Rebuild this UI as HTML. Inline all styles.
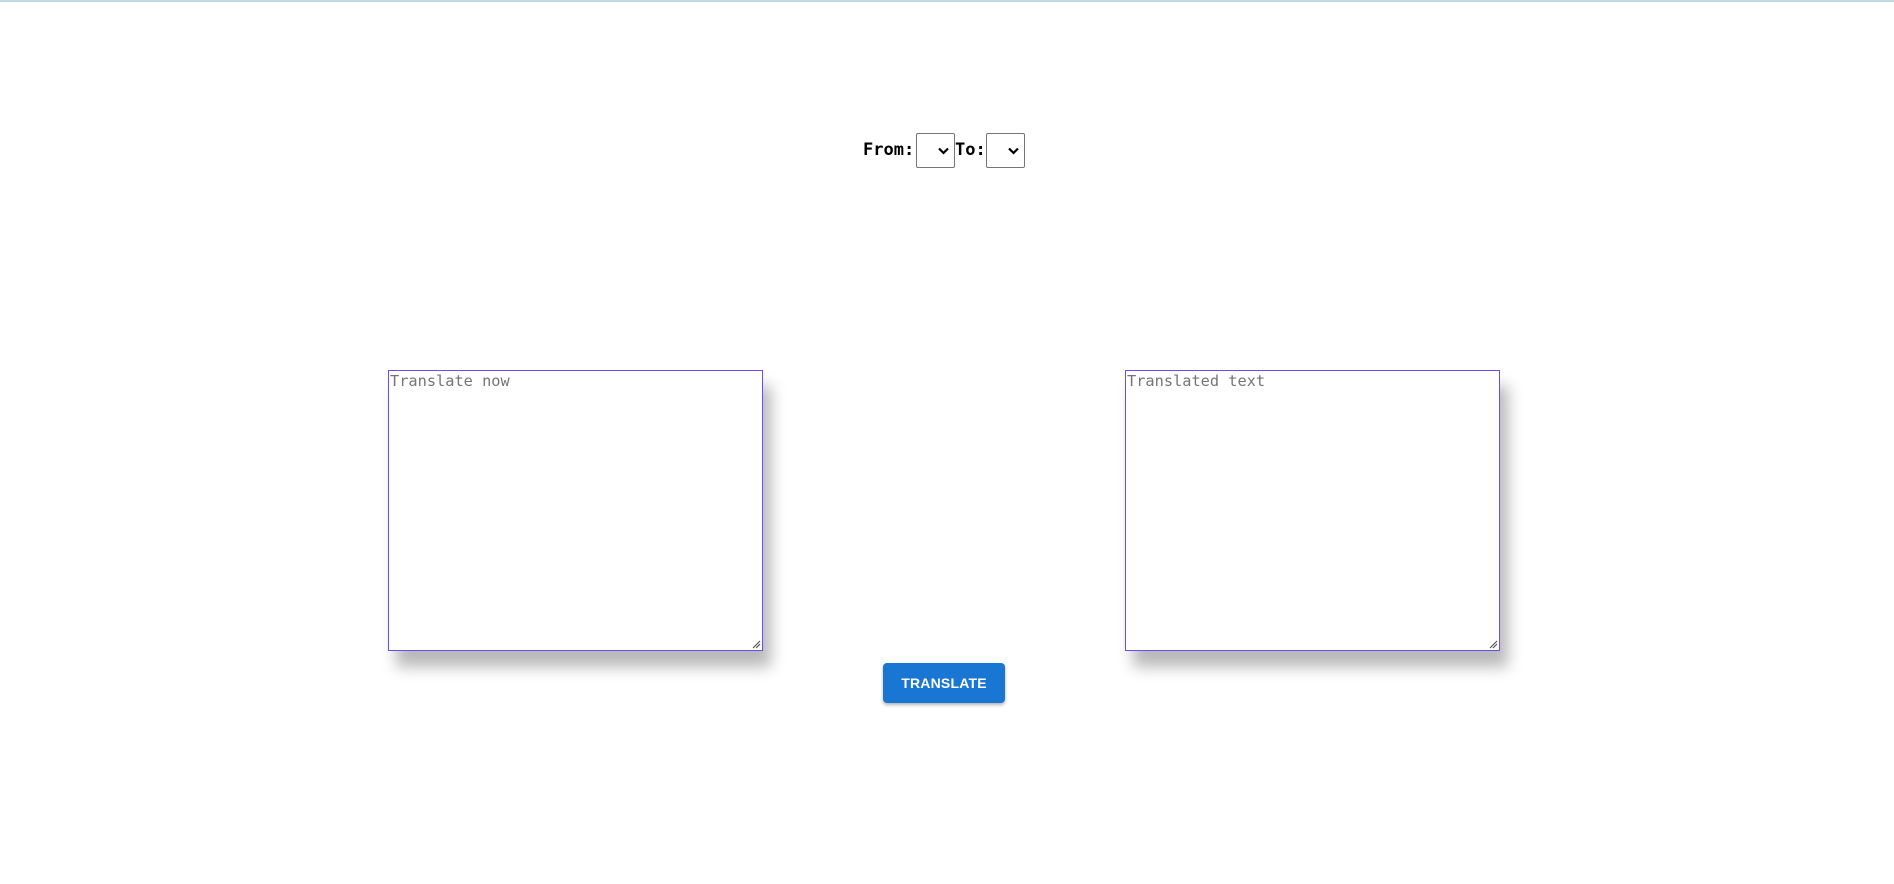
<!DOCTYPE html>
<html><head><meta charset="utf-8"><style>
html,body{margin:0;padding:0;background:#fff;width:1894px;height:884px;overflow:hidden;position:relative}
.topbar{position:absolute;left:0;top:0;width:100%;height:2px;background:#c5dbe3}
.lbl{position:absolute;font-family:"DejaVu Sans Mono","Liberation Mono",monospace;font-weight:bold;font-size:17px;color:#000;top:140px}
.sel{position:absolute;top:133px;width:37px;height:33px;border:1px solid #767676;border-radius:2px;background:#fff}
.sel svg{position:absolute;right:4px;top:13px}
.ta{position:absolute;top:370px;width:373px;height:279px;border:1px solid #6a4cff;background:#fff;box-shadow:8px 16px 14px rgba(0,0,0,0.28)}
.ta span{position:absolute;left:1px;top:1px;font-family:"DejaVu Sans Mono","Liberation Mono",monospace;font-size:15.3px;color:#757575}
.ta svg{position:absolute;right:1px;bottom:1px}
.btn{position:absolute;left:883px;top:663px;width:122px;height:40px;background:#1976d2;border-radius:4px;box-shadow:0 2px 3px rgba(0,0,0,0.3);color:#fff;font-family:"Liberation Sans",Arial,sans-serif;font-size:14px;font-weight:bold;line-height:40px;text-align:center;letter-spacing:0.2px}
</style></head><body>
<div class="topbar"></div>
<div class="lbl" style="left:863px">From:</div>
<div class="sel" style="left:916px"><svg width="13" height="8" viewBox="0 0 13 8"><path d="M2 1.5l4.5 4.5 4.5-4.5" stroke="#000" stroke-width="2.2" fill="none"/></svg></div>
<div class="lbl" style="left:955px">To:</div>
<div class="sel" style="left:986px"><svg width="13" height="8" viewBox="0 0 13 8"><path d="M2 1.5l4.5 4.5 4.5-4.5" stroke="#000" stroke-width="2.2" fill="none"/></svg></div>
<div class="ta" style="left:388px"><span>Translate now</span><svg width="9" height="9" viewBox="0 0 9 9"><path d="M1 8L8 1M4 8L8 4" stroke="#555" stroke-width="1.2"/></svg></div>
<div class="ta" style="left:1125px"><span>Translated text</span><svg width="9" height="9" viewBox="0 0 9 9"><path d="M1 8L8 1M4 8L8 4" stroke="#555" stroke-width="1.2"/></svg></div>
<div class="btn">TRANSLATE</div>
</body></html>
